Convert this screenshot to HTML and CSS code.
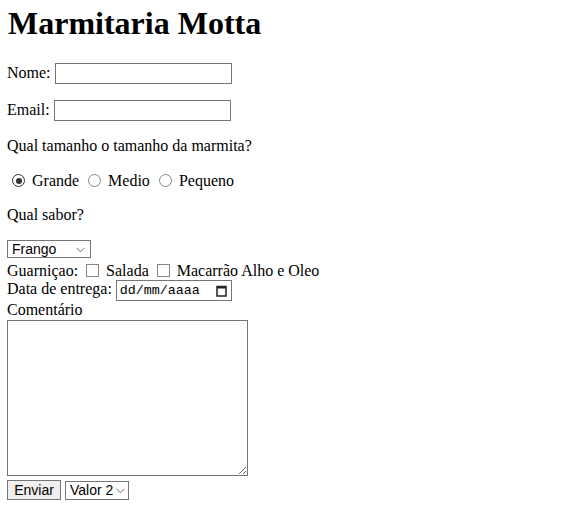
FILE: index.html
```html
<!DOCTYPE html>
<html lang="pt">
<head>
<meta charset="utf-8">
<title>Marmitaria Motta</title>
<link rel="stylesheet" href="styles.css">
</head>
<body>
<h1 class="title">Marmitaria Motta</h1>
<form class="form">
<p class="row">Nome: <input class="text" type="text"></p>
<p class="row">Email: <input class="text" type="email"></p>
<p class="row">Qual tamanho o tamanho da marmita?</p>
<p class="row"><input class="radio" type="radio" name="t" checked> Grande <input class="radio" type="radio" name="t"> Medio <input class="radio" type="radio" name="t"> Pequeno</p>
<p class="row">Qual sabor?</p>
<span class="sel sel-sabor"><select class="select sabor"><option>Frango</option></select><svg class="chev" width="9" height="6" viewBox="0 0 9 6"><path d="M0.5 0.8 L4.5 4.8 L8.5 0.8" fill="none" stroke="#6e6e6e" stroke-width="1"/></svg></span><br>
Guarniçao: <input class="check" type="checkbox"> Salada <input class="check" type="checkbox"> Macarrão Alho e Oleo<br>
Data de entrega: <span class="sel"><input class="date" type="text" value="dd/mm/aaaa" readonly><svg class="cal" width="11" height="12" viewBox="0 0 11 12"><rect x="1" y="1.5" width="9" height="9.5" fill="none" stroke="#222" stroke-width="1.5"/><rect x="1" y="1" width="9" height="2.5" fill="#222"/></svg></span><br>
Comentário<br>
<textarea class="comment"></textarea><br>
<button class="btn" type="button">Enviar</button> <span class="sel sel-valor"><select class="select valor"><option>Valor 2</option></select><svg class="chev" width="9" height="6" viewBox="0 0 9 6"><path d="M0.5 0.8 L4.5 4.8 L8.5 0.8" fill="none" stroke="#6e6e6e" stroke-width="1"/></svg></span>
</form>
</body>
</html>
```
FILE: styles.css
```css
body { margin: 5px 8px 8px 7px; font-family: "Liberation Serif", serif; font-size: 16px; color: #000; background: #fff; }
.title { font-size: 32px; margin: 0 0 21px 1px; }
.row { margin: 16px 0; }
input, select, button, textarea { font-family: "Liberation Sans", Arial, sans-serif; font-size: 13.333px; color: #000; }
.text { width: 177px; height: 21px; box-sizing: border-box; border: 1px solid #767676; padding: 1px 2px; background: #fff; }
.sel { position: relative; display: inline-block; vertical-align: baseline; }
.select { -webkit-appearance: none; appearance: none; box-sizing: border-box; height: 18px; border: 1px solid #767676; border-radius: 0; background: #fff; padding: 0 0 0 4px; line-height: 16px; }
.sabor { width: 84px; font-size: 14px; }
.valor { width: 64px; height: 19px; font-size: 14px; padding-left: 4px; }
.chev { position: absolute; right: 6px; top: 7px; pointer-events: none; }
.sel-valor .chev { top: 7px; right: 4px; }
.radio { -webkit-appearance: none; appearance: none; width: 13px; height: 13px; margin: 3px 3px 0 5px; border: 1px solid #858585; border-radius: 50%; box-sizing: border-box; background: #fff; vertical-align: -1px; position: relative; }
.radio:checked { border-color: #333; }
.radio:checked::after { content: ""; position: absolute; left: 2.5px; top: 2.5px; width: 6px; height: 6px; border-radius: 50%; background: #333; }
.check { -webkit-appearance: none; appearance: none; width: 13px; height: 13px; margin: 6px 3px 3px 4px; border: 1px solid #858585; box-sizing: border-box; background: #fff; vertical-align: -4px; }
.date { font-family: "Liberation Mono", monospace; font-size: 13.333px; width: 116px; height: 21px; box-sizing: border-box; border: 1px solid #767676; padding: 1px 2px 1px 3px; background: #fff; color: #000; }
.cal { position: absolute; right: 5px; top: 5px; pointer-events: none; }
.comment { width: 241px; height: 156px; box-sizing: border-box; border: 1px solid #767676; display: inline-block; vertical-align: bottom; margin-top: 1px; resize: both; }
.btn { box-sizing: border-box; width: 54px; height: 20px; border: 1px solid #767676; border-radius: 0; background: #efefef; font-size: 14px; padding: 0 6px; margin-top: 4px; }
```
